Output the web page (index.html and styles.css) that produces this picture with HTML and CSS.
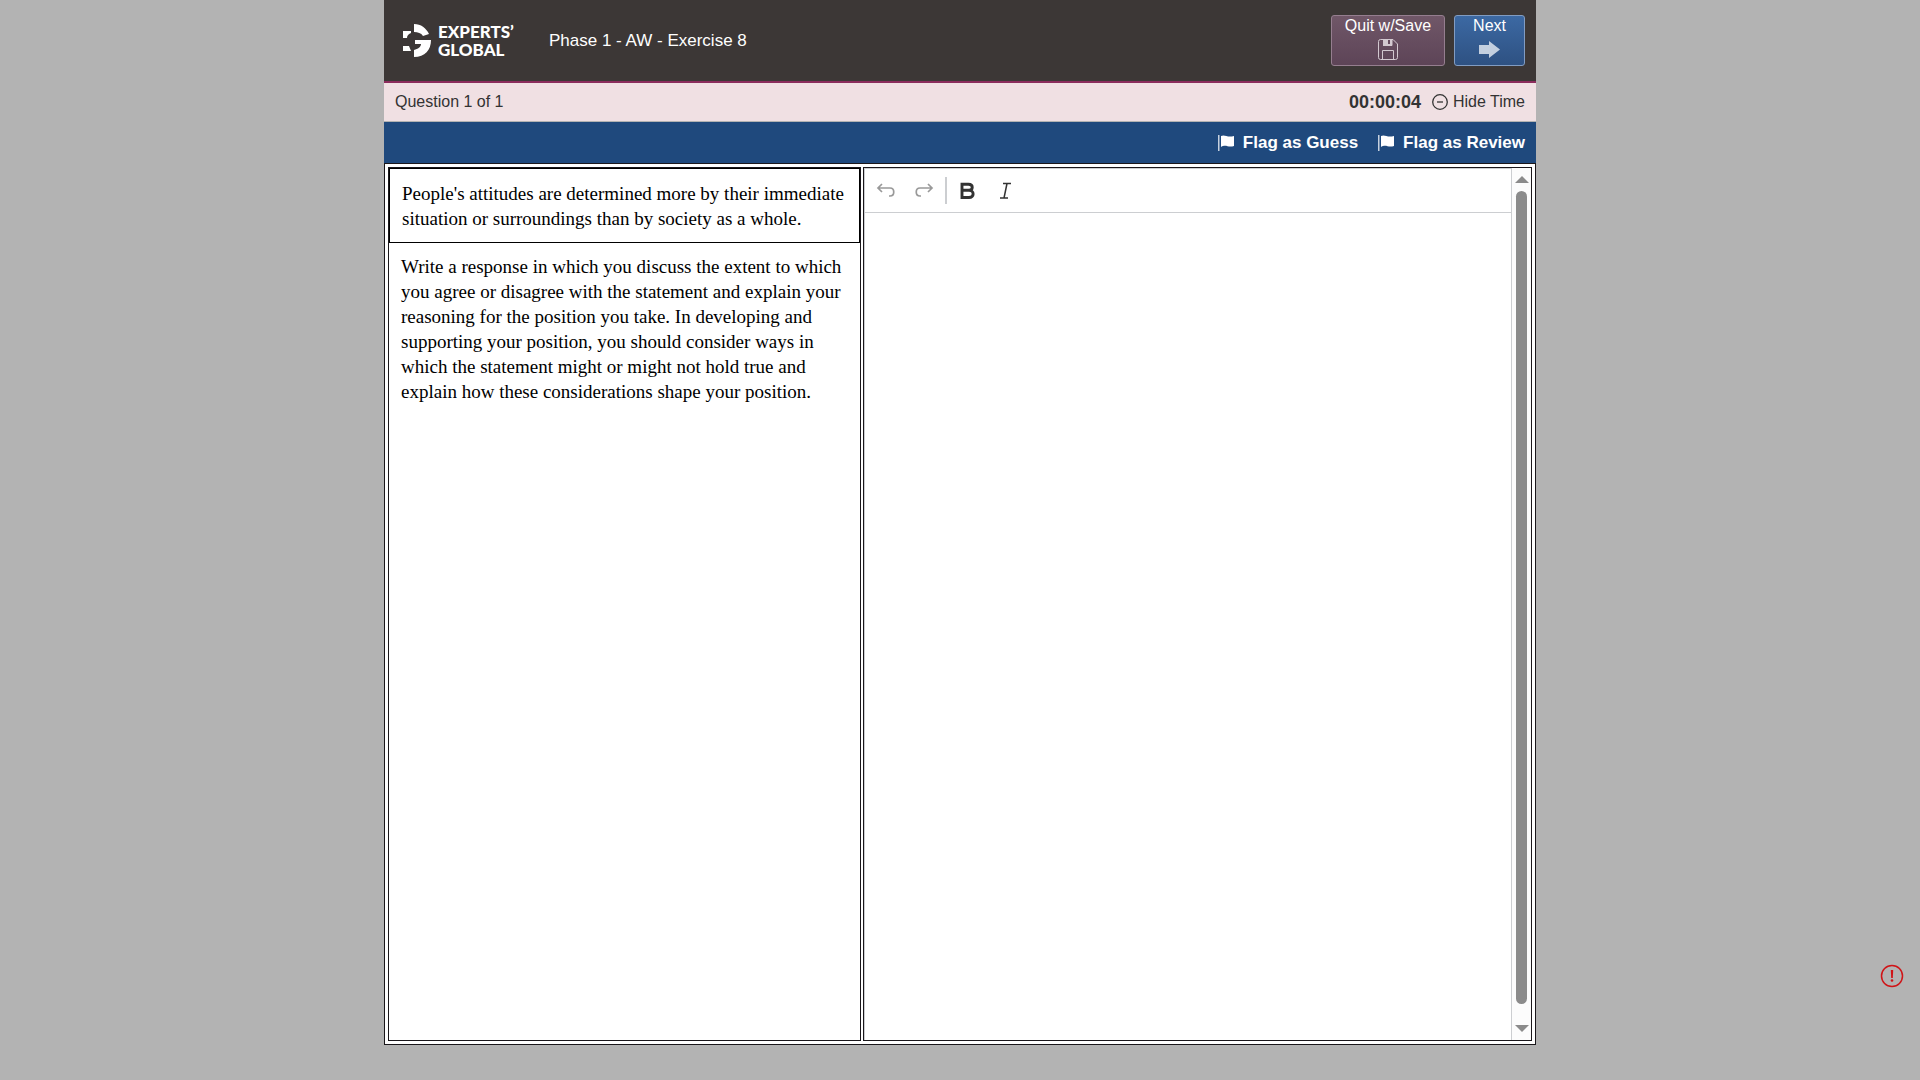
FILE: index.html
```
<!DOCTYPE html>
<html lang="en">
<head>
  <meta charset="UTF-8" />
  <meta name="viewport" content="width=device-width, initial-scale=1.0" />
  <title>Phase 1 - AW - Exercise 8</title>
  <link rel="stylesheet" href="styles.css">
</head>
<body>
  <div class="container">
    <header class="header">
      <div class="logo">
        <svg class="logo-mark" viewBox="0 0 28 34" width="28" height="34">
          <path d="M11 0C18 0 23 4 26 10L20 12C18 9 15 8 11 8Z" />
          <path d="M0 7H8V9C5 10 4 12 4 14H0Z" />
          <path d="M0 22H6L8 27H0Z" />
          <path d="M12 16H28C28 26 22 33 11 33V26C15 25 18 23 18 20H12Z" />
        </svg>
        <div class="logo-text">
          <span>EXPERTS’</span>
          <span>GLOBAL</span>
        </div>
      </div>
      <h1>Phase 1 - AW - Exercise 8</h1>
      <div class="header-buttons">
        <button class="nav-button quit" type="button">
          Quit w/Save
          <svg viewBox="0 0 20 21" width="20" height="21">
            <path d="M2.500.5H15L19.500 5V18.500a2 2 0 0 1-2 2H2.500a2 2 0 0 1-2-2V2.500a2 2 0 0 1 2-2ZM4.500 20V11.500H15.500V20M5.500 1V6.500H14V1" fill="none" stroke="#d3c9d0" />
            <path d="M5 1H10V5H12V1H14V7H5Z" fill="#d3c9d0" />
          </svg>
        </button>
        <button class="nav-button next" type="button">
          Next
          <svg viewBox="0 0 21 21" width="21" height="21">
            <path d="M0 6H10V2L21 10.500L10 19V15H0Z" fill="#c3cfdf" />
          </svg>
        </button>
      </div>
    </header>

    <div class="status-bar">
      <span>Question 1 of 1</span>
      <div class="timer">
        <strong>00:00:04</strong>
        <button class="hide-time" type="button">
          <svg viewBox="0 0 16 16" width="16" height="16">
            <circle cx="8" cy="8" r="7.300" />
            <path d="M5 8H11" />
          </svg>
          Hide Time
        </button>
      </div>
    </div>

    <div class="flag-bar">
      <button class="flag-button" type="button">
        <svg viewBox="0 0 17 16" width="17" height="16">
          <path d="M0 0H1.500V16H0Z" opacity=".75" />
          <path d="M3 1C7-1 9 3 16 1V11C10 13 8 9 3 12Z" />
        </svg>
        Flag as Guess
      </button>
      <button class="flag-button" type="button">
        <svg viewBox="0 0 17 16" width="17" height="16">
          <path d="M0 0H1.500V16H0Z" opacity=".75" />
          <path d="M3 1C7-1 9 3 16 1V11C10 13 8 9 3 12Z" />
        </svg>
        Flag as Review
      </button>
    </div>

    <main class="workspace">
      <section class="prompt">
        <div class="statement">People's attitudes are determined more by their immediate situation or surroundings than by society as a whole.</div>
        <p>Write a response in which you discuss the extent to which you agree or disagree with the statement and explain your reasoning for the position you take. In developing and supporting your position, you should consider ways in which the statement might or might not hold true and explain how these considerations shape your position.</p>
      </section>

      <section class="answer">
        <div class="editor">
          <div class="toolbar">
            <button class="tool" type="button" aria-label="Undo" disabled>
              <svg viewBox="0 0 20 20" width="20" height="20">
                <path d="M6 3L2 7L6 11M2 7H14C19 7 19 15 14 15H13" />
              </svg>
            </button>
            <button class="tool" type="button" aria-label="Redo" disabled>
              <svg viewBox="0 0 20 20" width="20" height="20">
                <path d="M14 3L18 7L14 11M18 7H6C1 7 1 15 6 15H7" />
              </svg>
            </button>
            <span class="separator"></span>
            <button class="tool" type="button" aria-label="Bold">
              <svg viewBox="0 0 20 20" width="20" height="20">
                <path d="M4 3.200H10.500C15.500 3.200 15.500 9.300 10.500 9.300H4ZM4 9.300H11C16.500 9.300 16.500 16.500 11 16.500H4Z" stroke-width="2.900" />
              </svg>
            </button>
            <button class="tool" type="button" aria-label="Italic">
              <svg viewBox="0 0 20 20" width="20" height="20">
                <path d="M7 2.500H15M4 17H12M11 2.500L8 17" stroke-width="1.500" />
              </svg>
            </button>
          </div>
          <textarea aria-label="Your response"></textarea>
        </div>
        <div class="scrollbar">
          <span class="arrow-up"></span>
          <span class="thumb"></span>
          <span class="arrow-down"></span>
        </div>
      </section>
    </main>
  </div>

  <button class="report" type="button" aria-label="Report a problem">
    <svg viewBox="0 0 24 24" width="24" height="24">
      <circle cx="12" cy="12" r="10.500" fill="none" stroke="#d01417" stroke-width="1.500" />
      <path d="M10.800 6H13.200L12.800 14H11.200Z" fill="#d01417" />
      <circle cx="12" cy="16.500" r="1.300" fill="#d01417" />
    </svg>
  </button>
</body>
</html>
```

FILE: styles.css
```
* {
  box-sizing: border-box;
}

body {
  margin: 0;
  background-color: #b3b3b3;
  color: #333;
  font-family: "Liberation Sans", Arial, sans-serif;
  font-size: 16px;
}

button {
  padding: 0;
  border: none;
  background: none;
  color: inherit;
  font: inherit;
  cursor: pointer;
}

.container {
  display: flex;
  flex-direction: column;
  width: 60%;
  min-height: 100vh;
  margin: 0 auto;
  padding-bottom: 35px;
}

.header {
  display: flex;
  align-items: center;
  height: 83px;
  padding: 0 11px 0 19px;
  border-bottom: 2px solid #8b2c5c;
  background-color: #3c3736;
  color: #fff;
}

.logo {
  display: flex;
  align-items: center;
  gap: 7px;
  width: 146px;
}

.logo-mark {
  fill: #fff;
}

.logo-text {
  display: flex;
  flex-direction: column;
  font-family: Lato, sans-serif;
  font-size: 17px;
  font-weight: 900;
  line-height: 18px;
}

.header h1 {
  margin: 0;
  font-size: 17px;
  font-weight: 400;
}

.header-buttons {
  display: flex;
  gap: 9px;
  margin-left: auto;
}

.nav-button {
  display: flex;
  flex-direction: column;
  align-items: center;
  gap: 3px;
  height: 51px;
  border: 1px solid;
  border-radius: 3px;
  line-height: 20px;
}

.quit {
  padding: 0 13px;
  border-color: #957e8f;
  background: linear-gradient(#705768, #5d4457);
}

.next {
  padding: 0 18px;
  border-color: #819cc2;
  background: linear-gradient(#3c69a3, #2e5182);
}

.status-bar {
  display: flex;
  align-items: center;
  justify-content: space-between;
  height: 39px;
  padding: 0 11px;
  border-bottom: 1px solid #b3b3b3;
  background-color: #f0e0e3;
}

.timer {
  display: flex;
  align-items: center;
  gap: 11px;
}

.timer strong {
  font-size: 18px;
}

.hide-time {
  display: flex;
  align-items: center;
  gap: 5px;
}

.hide-time svg {
  fill: none;
  stroke: #333;
  stroke-width: 1.3;
}

.flag-bar {
  display: flex;
  align-items: center;
  justify-content: flex-end;
  gap: 20px;
  height: 41px;
  padding: 0 11px;
  background-color: #1f497d;
  color: #fff;
}

.flag-button {
  display: flex;
  align-items: center;
  gap: 8px;
  font-size: 17px;
  font-weight: 700;
}

.flag-button svg {
  fill: #fff;
}

.workspace {
  display: flex;
  flex: 1;
  gap: 2px;
  padding: 3px;
  border: 1px solid #1a171b;
  background-color: #fff;
}

.prompt {
  flex: 0 0 473px;
  border: 1px solid #1a171b;
  color: #000;
  font-family: "Liberation Serif", "Times New Roman", serif;
  font-size: 19px;
  line-height: 25px;
}

.statement {
  padding: 12px 12px 11px;
  border: 1px solid #000;
}

.prompt p {
  margin: 0;
  padding: 11px 12px;
}

.answer {
  display: flex;
  flex: 1;
  border: 1px solid #1a171b;
}

.editor {
  display: flex;
  flex: 1;
  flex-direction: column;
  border: solid #ccced1;
  border-width: 1px 1px 0;
}

.toolbar {
  display: flex;
  align-items: center;
  gap: 8px;
  height: 44px;
  padding: 0 6px;
  border-bottom: 1px solid #ccced1;
}

.tool {
  display: flex;
  align-items: center;
  justify-content: center;
  width: 30px;
  height: 30px;
}

.tool svg {
  fill: none;
  stroke: #333;
  stroke-width: 1.7;
}

.tool:disabled svg {
  stroke: #999;
}

.separator {
  width: 2px;
  height: 27px;
  margin: 0 -2px;
  background-color: #ccced1;
}

textarea {
  flex: 1;
  padding: 10px;
  border: none;
  outline: none;
  resize: none;
  font: inherit;
}

.scrollbar {
  display: flex;
  flex-direction: column;
  align-items: center;
  width: 19px;
  padding: 8px 0;
  background-color: #fcfcfc;
}

.arrow-up,
.arrow-down {
  border: solid transparent;
  border-width: 0 7px;
}

.arrow-up {
  border-bottom: 7px solid #8b8b8b;
}

.arrow-down {
  border-top: 7px solid #8b8b8b;
}

.thumb {
  flex: 1;
  width: 11px;
  margin: 8px 0 21px;
  border-radius: 6px;
  background-color: #8b8b8b;
}

.report {
  position: fixed;
  right: 16px;
  bottom: 92px;
  display: flex;
}
```
